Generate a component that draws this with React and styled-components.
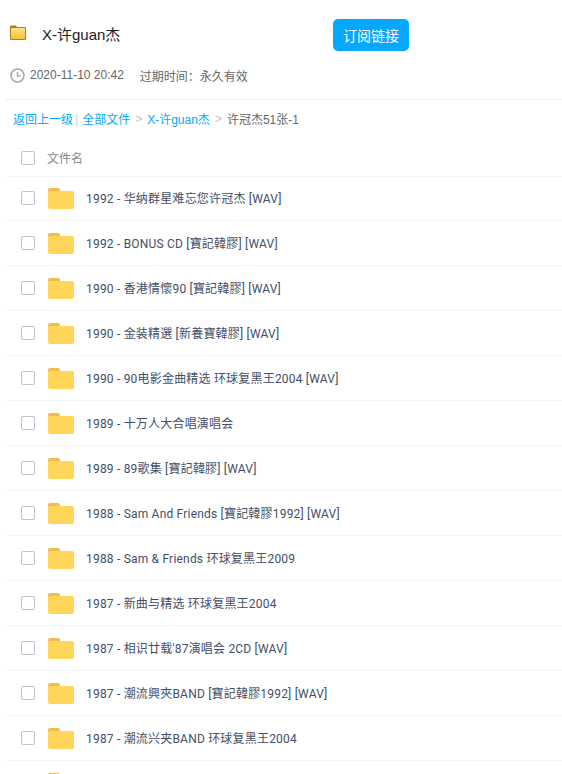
import React from "react";
import styled, { createGlobalStyle } from "styled-components";

const files = [
  "1992 - 华纳群星难忘您许冠杰 [WAV]",
  "1992 - BONUS CD [寶記韓膠] [WAV]",
  "1990 - 香港情懷90 [寶記韓膠] [WAV]",
  "1990 - 金装精選 [新養寶韓膠] [WAV]",
  "1990 - 90电影金曲精选 环球复黑王2004 [WAV]",
  "1989 - 十万人大合唱演唱会",
  "1989 - 89歌集 [寶記韓膠] [WAV]",
  "1988 - Sam And Friends [寶記韓膠1992] [WAV]",
  "1988 - Sam & Friends 环球复黑王2009",
  "1987 - 新曲与精选 环球复黑王2004",
  "1987 - 相识廿载'87演唱会 2CD [WAV]",
  "1987 - 潮流興夾BAND [寶記韓膠1992] [WAV]",
  "1987 - 潮流兴夹BAND 环球复黑王2004",
  "",
];

const GlobalStyle = createGlobalStyle`
  html, body {
    margin: 0;
    height: 774px;
    overflow: hidden;
    background: #fff;
    font-family: "Liberation Sans", "Noto Sans CJK SC", sans-serif;
  }
`;

const Page = styled.div`
  width: 562px;
  padding-left: 5px;
  box-sizing: border-box;
`;

const Header = styled.div`
  height: 99px;
  border-bottom: 1px solid #f1f2f4;
  padding-left: 5px;
`;

const TitleRow = styled.div`
  display: flex;
  align-items: center;
  height: 32px;
  padding-top: 19px;
`;

const TitleIcon = styled.svg`
  flex: none;
  width: 16px;
  height: 15px;
  margin-bottom: 6px;
`;

const Title = styled.h1`
  width: 291px;
  margin: 0 0 4px 16px;
  font-size: 15px;
  font-weight: 400;
  color: #222;
`;

const SubscribeButton = styled.button`
  width: 76px;
  height: 32px;
  padding: 0;
  border: 0;
  border-radius: 5px;
  background: #06a7ff;
  color: #fff;
  font: inherit;
  font-size: 14px;
`;

const Meta = styled.div`
  display: flex;
  align-items: center;
  margin-top: 13px;
  height: 22px;
  font-size: 12px;
  color: #666;
`;

const MetaDate = styled.span`
  margin: 0 16px 0 5px;
`;

const Crumbs = styled.div`
  display: flex;
  align-items: center;
  height: 37px;
  padding: 0 0 3px 8px;
  font-size: 12px;
  color: #666;
`;

const CrumbLink = styled.a`
  color: #06a7ff;
`;

const CrumbSep = styled.span`
  color: ${(p) => (p.$bar ? "#b8dcf2" : "#c4c4c4")};
  margin: ${(p) => (p.$bar ? "0 4px 0 2px" : "0 5px")};
`;

const Row = styled.div`
  display: flex;
  align-items: center;
  height: 44px;
  border-bottom: 1px solid #f3f5f9;
  padding-left: 16px;
  font-size: 12px;
  color: #424e67;
`;

const HeadRow = styled(Row)`
  height: 36px;
  margin-bottom: -1px;
  color: #888;
`;

const Check = styled.span`
  flex: none;
  width: 12px;
  height: 12px;
  border: 1px solid #b8c3d3;
  border-radius: 2px;
  background: #fff;
`;

const HeadLabel = styled.span`
  margin: 0 0 2px 12px;
  font-family: Roboto, "Noto Sans CJK SC", sans-serif;
`;

const FileName = styled.span`
  margin-bottom: 2px;
  font-family: Roboto, "Noto Sans CJK SC", sans-serif;
  letter-spacing: 0.2px;
`;

const FolderIcon = styled.svg`
  flex: none;
  width: 26px;
  height: 21px;
  margin: 0 12px 0 13px;
`;

const Folder = () => (
  <FolderIcon viewBox="0 0 26 21">
    <path d="M0 2a2 2 0 0 1 2-2h8a2 2 0 0 1 2 2v2H0z" fill="#f1bd4e" />
    <rect x="0" y="3" width="26" height="18" rx="2" fill="#ffd659" />
  </FolderIcon>
);

export default function App() {
  return (
    <Page>
      <GlobalStyle />
      <Header>
        <TitleRow>
          <TitleIcon viewBox="0 0 16 15">
            <defs>
              <linearGradient id="titleFolder" x1="0" y1="0" x2="0" y2="1">
                <stop offset="0" stopColor="#fde08a" />
                <stop offset="1" stopColor="#f8c23e" />
              </linearGradient>
            </defs>
            <path d="M0 1.5A1 1 0 0 1 1 .5h5l1 1.5h8a1 1 0 0 1 1 1v11a1 1 0 0 1-1 1H1a1 1 0 0 1-1-1z" fill="#b07d1c" />
            <rect x="1" y="3" width="14" height="11" fill="url(#titleFolder)" />
          </TitleIcon>
          <Title>X-许guan杰</Title>
          <SubscribeButton>订阅链接</SubscribeButton>
        </TitleRow>
        <Meta>
          <svg width="15" height="15" viewBox="0 0 15 15" fill="none" stroke="#a8a8a8">
            <circle cx="7.5" cy="7.5" r="6.5" strokeWidth="1.6" />
            <path d="M7.5 4v4h3" strokeWidth="1.4" />
          </svg>
          <MetaDate>2020-11-10 20:42</MetaDate>
          <span>过期时间：永久有效</span>
        </Meta>
      </Header>
      <Crumbs>
        <CrumbLink>返回上一级</CrumbLink>
        <CrumbSep $bar>|</CrumbSep>
        <CrumbLink>全部文件</CrumbLink>
        <CrumbSep>&gt;</CrumbSep>
        <CrumbLink>X-许guan杰</CrumbLink>
        <CrumbSep>&gt;</CrumbSep>
        <span>许冠杰51张-1</span>
      </Crumbs>
      <HeadRow>
        <Check />
        <HeadLabel>文件名</HeadLabel>
      </HeadRow>
      {files.map((name) => (
        <Row key={name}>
          <Check />
          <Folder />
          {name && <FileName>{name}</FileName>}
        </Row>
      ))}
    </Page>
  );
}
